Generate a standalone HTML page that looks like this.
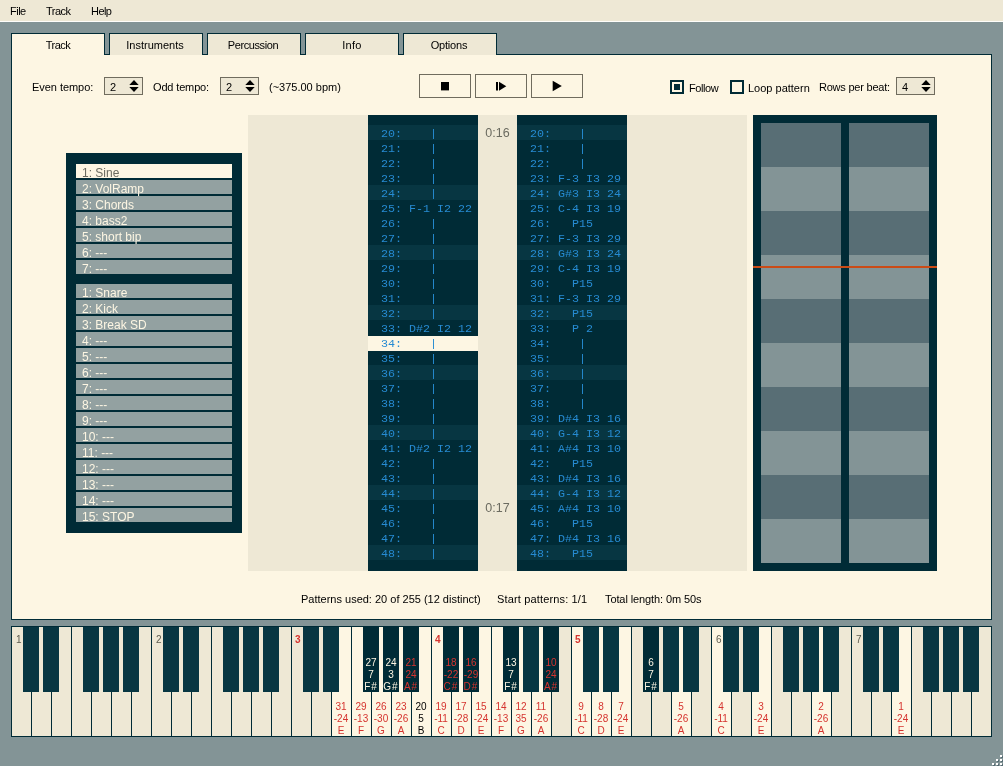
<!DOCTYPE html>
<html><head><meta charset="utf-8"><title>Tracker</title>
<style>
*{box-sizing:border-box;margin:0;padding:0}
html,body{width:1003px;height:766px;overflow:hidden}
body{background:#839496;font-family:"Liberation Sans",sans-serif;font-size:11px;color:#000;position:relative;will-change:transform}
.a{position:absolute}
.t{position:absolute;white-space:pre;line-height:14px;height:14px}
#menu{left:0;top:0;width:1003px;height:22px;background:#eee8d5;border-bottom:1px solid #fffefa}
.tab{position:absolute;top:33px;width:94px;height:22px;background:#eee8d5;border:1px solid #002b36;border-bottom:none;text-align:center;line-height:22px;white-space:pre}
.tab.act{background:#fdf6e3}
#panel{left:11px;top:54px;width:981px;height:566px;background:#fdf6e3;border:1px solid #002b36}
.spin{position:absolute;width:39px;height:18px;background:#eee8d5;border:1px solid #706c5e}
.spin span{position:absolute;left:5px;top:2px;line-height:14px}
.spin svg{position:absolute;right:2px;top:2px}
.btn{position:absolute;top:74px;width:52px;height:24px;border:1px solid #706c5e;background:#fdf6e3}
.cb{position:absolute;top:80px;width:14px;height:14px;border:2px solid #002b36;background:#fdf6e3}
.li{position:absolute;left:76px;width:156px;height:14px;background:#93a1a1;color:#fdf6e3;font-size:12px;line-height:14px;padding-left:6px;white-space:pre}
.li span{position:relative;top:2px}
.li.sel{background:#fdf6e3;color:#6b6b60}
.pcol{position:absolute;top:115px;width:110px;height:456px;background:#002b36;overflow:hidden}
.row{position:absolute;left:0;width:110px;height:15px;font-family:"Liberation Mono",monospace;font-size:11.667px;line-height:18px;color:#268bd2;white-space:pre;padding-left:13px;overflow:hidden}
.row.hl{background:#073642}
.row.cur{background:#fdf6e3;margin-top:1px;line-height:16px}
.tm{position:absolute;left:478px;width:39px;text-align:center;font-size:12.5px;color:#6b6b60;line-height:17px}
.wk{position:absolute;top:627px;width:19px;height:109px;background:#eee8d5}
.wk.on{background:#fdf6e3}
.bk{position:absolute;top:627px;width:16px;height:65px;background:#073642}
.bk.on{background:#002b36}
.kl{position:absolute;width:20px;text-align:center;font-size:10px;line-height:12px;white-space:pre}
.kl i{font-style:normal;letter-spacing:1px}
.ol{position:absolute;top:634px;font-size:10px;line-height:12px;color:#5b5a4e}
.ol.r{color:#d5342f;font-weight:bold}
</style></head><body>

<div id="menu" class="a"></div>
<div class="t" style="left:10px;top:4px;letter-spacing:-0.5px">File</div>
<div class="t" style="left:46px;top:4px;letter-spacing:-0.5px">Track</div>
<div class="t" style="left:91px;top:4px;letter-spacing:-0.55px">Help</div>
<div id="panel" class="a"></div>
<div class="tab act" style="left:11px;letter-spacing:-0.5px;text-indent:0px">Track</div>
<div class="tab" style="left:109px;letter-spacing:0px;text-indent:-2px">Instruments</div>
<div class="tab" style="left:207px;letter-spacing:-0.4px;text-indent:-2px">Percussion</div>
<div class="tab" style="left:305px;letter-spacing:0.3px;text-indent:0px">Info</div>
<div class="tab" style="left:403px;letter-spacing:-0.2px;text-indent:-2px">Options</div>
<div class="t" style="left:32px;top:80px;letter-spacing:-0.05px">Even tempo:</div>
<div class="t" style="left:153px;top:80px;letter-spacing:-0.15px">Odd tempo:</div>
<div class="t" style="left:269px;top:80px">(~375.00 bpm)</div>
<div class="spin" style="left:104px;top:77px"><span>2</span><svg width="11" height="12" viewBox="0 0 11 12"><path d="M0.3 5 L5 0 L9.7 5 Z M0.3 7 L5 12 L9.7 7 Z" fill="#000"/></svg></div>
<div class="spin" style="left:220px;top:77px"><span>2</span><svg width="11" height="12" viewBox="0 0 11 12"><path d="M0.3 5 L5 0 L9.7 5 Z M0.3 7 L5 12 L9.7 7 Z" fill="#000"/></svg></div>
<div class="spin" style="left:896px;top:77px"><span>4</span><svg width="11" height="12" viewBox="0 0 11 12"><path d="M0.3 5 L5 0 L9.7 5 Z M0.3 7 L5 12 L9.7 7 Z" fill="#000"/></svg></div>
<div class="btn" style="left:419px"></div>
<div class="btn" style="left:475px"></div>
<div class="btn" style="left:531px"></div>
<svg class="a" style="left:419px;top:74px" width="164" height="24"><rect x="22" y="8" width="8" height="8.4" fill="#000"/><rect x="77" y="8" width="2" height="8.5" fill="#000"/><path d="M80 7.7 L87.3 12.2 L80 16.7 Z" fill="#000"/><path d="M133.7 6.8 L142.8 12 L133.7 17.2 Z" fill="#000"/></svg>
<div class="cb" style="left:670px"><div class="a" style="left:2px;top:2px;width:6px;height:6px;background:#002b36"></div></div>
<div class="t" style="left:689px;top:81px;letter-spacing:-0.4px">Follow</div>
<div class="cb" style="left:730px"></div>
<div class="t" style="left:748px;top:81px">Loop pattern</div>
<div class="t" style="left:819px;top:80px;letter-spacing:-0.22px">Rows per beat:</div>
<div class="a" style="left:66px;top:153px;width:176px;height:380px;background:#002b36"></div>
<div class="li sel" style="top:164px"><span>1: Sine</span></div>
<div class="li" style="top:180px"><span>2: VolRamp</span></div>
<div class="li" style="top:196px"><span>3: Chords</span></div>
<div class="li" style="top:212px"><span>4: bass2</span></div>
<div class="li" style="top:228px"><span>5: short bip</span></div>
<div class="li" style="top:244px"><span>6: ---</span></div>
<div class="li" style="top:260px"><span>7: ---</span></div>
<div class="li" style="top:284px"><span>1: Snare</span></div>
<div class="li" style="top:300px"><span>2: Kick</span></div>
<div class="li" style="top:316px"><span>3: Break SD</span></div>
<div class="li" style="top:332px"><span>4: ---</span></div>
<div class="li" style="top:348px"><span>5: ---</span></div>
<div class="li" style="top:364px"><span>6: ---</span></div>
<div class="li" style="top:380px"><span>7: ---</span></div>
<div class="li" style="top:396px"><span>8: ---</span></div>
<div class="li" style="top:412px"><span>9: ---</span></div>
<div class="li" style="top:428px"><span>10: ---</span></div>
<div class="li" style="top:444px"><span>11: ---</span></div>
<div class="li" style="top:460px"><span>12: ---</span></div>
<div class="li" style="top:476px"><span>13: ---</span></div>
<div class="li" style="top:492px"><span>14: ---</span></div>
<div class="li" style="top:508px"><span>15: STOP</span></div>
<div class="a" style="left:248px;top:115px;width:499px;height:456px;background:#eee8d5"></div>
<div class="pcol" style="left:368px">
<div class="row hl" style="top:10px">20:    |</div>
<div class="row" style="top:25px">21:    |</div>
<div class="row" style="top:40px">22:    |</div>
<div class="row" style="top:55px">23:    |</div>
<div class="row hl" style="top:70px">24:    |</div>
<div class="row" style="top:85px">25: F-1 I2 22</div>
<div class="row" style="top:100px">26:    |</div>
<div class="row" style="top:115px">27:    |</div>
<div class="row hl" style="top:130px">28:    |</div>
<div class="row" style="top:145px">29:    |</div>
<div class="row" style="top:160px">30:    |</div>
<div class="row" style="top:175px">31:    |</div>
<div class="row hl" style="top:190px">32:    |</div>
<div class="row" style="top:205px">33: D#2 I2 12</div>
<div class="row cur" style="top:220px">34:    |</div>
<div class="row" style="top:235px">35:    |</div>
<div class="row hl" style="top:250px">36:    |</div>
<div class="row" style="top:265px">37:    |</div>
<div class="row" style="top:280px">38:    |</div>
<div class="row" style="top:295px">39:    |</div>
<div class="row hl" style="top:310px">40:    |</div>
<div class="row" style="top:325px">41: D#2 I2 12</div>
<div class="row" style="top:340px">42:    |</div>
<div class="row" style="top:355px">43:    |</div>
<div class="row hl" style="top:370px">44:    |</div>
<div class="row" style="top:385px">45:    |</div>
<div class="row" style="top:400px">46:    |</div>
<div class="row" style="top:415px">47:    |</div>
<div class="row hl" style="top:430px">48:    |</div>
</div>
<div class="pcol" style="left:517px">
<div class="row hl" style="top:10px">20:    |</div>
<div class="row" style="top:25px">21:    |</div>
<div class="row" style="top:40px">22:    |</div>
<div class="row" style="top:55px">23: F-3 I3 29</div>
<div class="row hl" style="top:70px">24: G#3 I3 24</div>
<div class="row" style="top:85px">25: C-4 I3 19</div>
<div class="row" style="top:100px">26:   P15</div>
<div class="row" style="top:115px">27: F-3 I3 29</div>
<div class="row hl" style="top:130px">28: G#3 I3 24</div>
<div class="row" style="top:145px">29: C-4 I3 19</div>
<div class="row" style="top:160px">30:   P15</div>
<div class="row" style="top:175px">31: F-3 I3 29</div>
<div class="row hl" style="top:190px">32:   P15</div>
<div class="row" style="top:205px">33:   P 2</div>
<div class="row" style="top:220px">34:    |</div>
<div class="row" style="top:235px">35:    |</div>
<div class="row hl" style="top:250px">36:    |</div>
<div class="row" style="top:265px">37:    |</div>
<div class="row" style="top:280px">38:    |</div>
<div class="row" style="top:295px">39: D#4 I3 16</div>
<div class="row hl" style="top:310px">40: G-4 I3 12</div>
<div class="row" style="top:325px">41: A#4 I3 10</div>
<div class="row" style="top:340px">42:   P15</div>
<div class="row" style="top:355px">43: D#4 I3 16</div>
<div class="row hl" style="top:370px">44: G-4 I3 12</div>
<div class="row" style="top:385px">45: A#4 I3 10</div>
<div class="row" style="top:400px">46:   P15</div>
<div class="row" style="top:415px">47: D#4 I3 16</div>
<div class="row hl" style="top:430px">48:   P15</div>
</div>
<div class="tm" style="top:125px">0:16</div>
<div class="tm" style="top:500px">0:17</div>
<div class="a" style="left:753px;top:115px;width:184px;height:456px;background:#002b36"></div>
<div class="a" style="left:761px;top:123px;width:80px;height:440px;background:repeating-linear-gradient(to bottom,#586e75 0,#586e75 44px,#839496 44px,#839496 88px)"></div>
<div class="a" style="left:849px;top:123px;width:80px;height:440px;background:repeating-linear-gradient(to bottom,#586e75 0,#586e75 44px,#839496 44px,#839496 88px)"></div>
<div class="a" style="left:753px;top:266px;width:184px;height:2px;background:#cb4b16"></div>
<div class="t" style="left:301px;top:592px">Patterns used: 20 of 255 (12 distinct)</div>
<div class="t" style="left:497px;top:592px;letter-spacing:0.15px">Start patterns: 1/1</div>
<div class="t" style="left:605px;top:592px;letter-spacing:-0.1px">Total length: 0m 50s</div>
<div class="a" style="left:11px;top:626px;width:981px;height:111px;background:#002b36"></div>
<div class="wk" style="left:12px"></div>
<div class="wk" style="left:32px"></div>
<div class="wk" style="left:52px"></div>
<div class="wk" style="left:72px"></div>
<div class="wk" style="left:92px"></div>
<div class="wk" style="left:112px"></div>
<div class="wk" style="left:132px"></div>
<div class="wk" style="left:152px"></div>
<div class="wk" style="left:172px"></div>
<div class="wk" style="left:192px"></div>
<div class="wk" style="left:212px"></div>
<div class="wk" style="left:232px"></div>
<div class="wk" style="left:252px"></div>
<div class="wk" style="left:272px"></div>
<div class="wk" style="left:292px"></div>
<div class="wk" style="left:312px"></div>
<div class="wk on" style="left:332px"></div>
<div class="kl" style="left:331px;top:701px;color:#d5342f">31
-24
E</div>
<div class="wk on" style="left:352px"></div>
<div class="kl" style="left:351px;top:701px;color:#d5342f">29
-13
F</div>
<div class="wk on" style="left:372px"></div>
<div class="kl" style="left:371px;top:701px;color:#d5342f">26
-30
G</div>
<div class="wk on" style="left:392px"></div>
<div class="kl" style="left:391px;top:701px;color:#d5342f">23
-26
A</div>
<div class="wk on" style="left:412px"></div>
<div class="kl" style="left:411px;top:701px;color:#000">20
5
B</div>
<div class="wk on" style="left:432px"></div>
<div class="kl" style="left:431px;top:701px;color:#d5342f">19
-11
C</div>
<div class="wk on" style="left:452px"></div>
<div class="kl" style="left:451px;top:701px;color:#d5342f">17
-28
D</div>
<div class="wk on" style="left:472px"></div>
<div class="kl" style="left:471px;top:701px;color:#d5342f">15
-24
E</div>
<div class="wk on" style="left:492px"></div>
<div class="kl" style="left:491px;top:701px;color:#d5342f">14
-13
F</div>
<div class="wk on" style="left:512px"></div>
<div class="kl" style="left:511px;top:701px;color:#d5342f">12
35
G</div>
<div class="wk on" style="left:532px"></div>
<div class="kl" style="left:531px;top:701px;color:#d5342f">11
-26
A</div>
<div class="wk" style="left:552px"></div>
<div class="wk on" style="left:572px"></div>
<div class="kl" style="left:571px;top:701px;color:#d5342f">9
-11
C</div>
<div class="wk on" style="left:592px"></div>
<div class="kl" style="left:591px;top:701px;color:#d5342f">8
-28
D</div>
<div class="wk on" style="left:612px"></div>
<div class="kl" style="left:611px;top:701px;color:#d5342f">7
-24
E</div>
<div class="wk" style="left:632px"></div>
<div class="wk" style="left:652px"></div>
<div class="wk on" style="left:672px"></div>
<div class="kl" style="left:671px;top:701px;color:#d5342f">5
-26
A</div>
<div class="wk" style="left:692px"></div>
<div class="wk on" style="left:712px"></div>
<div class="kl" style="left:711px;top:701px;color:#d5342f">4
-11
C</div>
<div class="wk" style="left:732px"></div>
<div class="wk on" style="left:752px"></div>
<div class="kl" style="left:751px;top:701px;color:#d5342f">3
-24
E</div>
<div class="wk" style="left:772px"></div>
<div class="wk" style="left:792px"></div>
<div class="wk on" style="left:812px"></div>
<div class="kl" style="left:811px;top:701px;color:#d5342f">2
-26
A</div>
<div class="wk" style="left:832px"></div>
<div class="wk" style="left:852px"></div>
<div class="wk" style="left:872px"></div>
<div class="wk on" style="left:892px"></div>
<div class="kl" style="left:891px;top:701px;color:#d5342f">1
-24
E</div>
<div class="wk" style="left:912px"></div>
<div class="wk" style="left:932px"></div>
<div class="wk" style="left:952px"></div>
<div class="wk" style="left:972px"></div>
<div class="bk" style="left:23px"></div>
<div class="bk" style="left:43px"></div>
<div class="bk" style="left:83px"></div>
<div class="bk" style="left:103px"></div>
<div class="bk" style="left:123px"></div>
<div class="bk" style="left:163px"></div>
<div class="bk" style="left:183px"></div>
<div class="bk" style="left:223px"></div>
<div class="bk" style="left:243px"></div>
<div class="bk" style="left:263px"></div>
<div class="bk" style="left:303px"></div>
<div class="bk" style="left:323px"></div>
<div class="bk on" style="left:363px"></div>
<div class="kl" style="left:361px;top:657px;color:#fdf6e3">27
7
<i>F#</i></div>
<div class="bk on" style="left:383px"></div>
<div class="kl" style="left:381px;top:657px;color:#fdf6e3">24
3
<i>G#</i></div>
<div class="bk on" style="left:403px"></div>
<div class="kl" style="left:401px;top:657px;color:#d5342f">21
24
<i>A#</i></div>
<div class="bk on" style="left:443px"></div>
<div class="kl" style="left:441px;top:657px;color:#d5342f">18
-22
<i>C#</i></div>
<div class="bk on" style="left:463px"></div>
<div class="kl" style="left:461px;top:657px;color:#d5342f">16
-29
<i>D#</i></div>
<div class="bk on" style="left:503px"></div>
<div class="kl" style="left:501px;top:657px;color:#fdf6e3">13
7
<i>F#</i></div>
<div class="bk" style="left:523px"></div>
<div class="bk on" style="left:543px"></div>
<div class="kl" style="left:541px;top:657px;color:#d5342f">10
24
<i>A#</i></div>
<div class="bk" style="left:583px"></div>
<div class="bk" style="left:603px"></div>
<div class="bk on" style="left:643px"></div>
<div class="kl" style="left:641px;top:657px;color:#fdf6e3">6
7
<i>F#</i></div>
<div class="bk" style="left:663px"></div>
<div class="bk" style="left:683px"></div>
<div class="bk" style="left:723px"></div>
<div class="bk" style="left:743px"></div>
<div class="bk" style="left:783px"></div>
<div class="bk" style="left:803px"></div>
<div class="bk" style="left:823px"></div>
<div class="bk" style="left:863px"></div>
<div class="bk" style="left:883px"></div>
<div class="bk" style="left:923px"></div>
<div class="bk" style="left:943px"></div>
<div class="bk" style="left:963px"></div>
<div class="ol" style="left:16px">1</div>
<div class="ol" style="left:156px">2</div>
<div class="ol r" style="left:295px">3</div>
<div class="ol r" style="left:435px">4</div>
<div class="ol r" style="left:575px">5</div>
<div class="ol" style="left:716px">6</div>
<div class="ol" style="left:856px">7</div>
<svg class="a" style="left:991px;top:754px" width="12" height="12"><rect x="10" y="2" width="2" height="2" fill="#586e75"/><rect x="6" y="6" width="2" height="2" fill="#586e75"/><rect x="10" y="6" width="2" height="2" fill="#586e75"/><rect x="2" y="10" width="2" height="2" fill="#586e75"/><rect x="6" y="10" width="2" height="2" fill="#586e75"/><rect x="10" y="10" width="2" height="2" fill="#586e75"/><rect x="9" y="1" width="2" height="2" fill="#fff"/><rect x="5" y="5" width="2" height="2" fill="#fff"/><rect x="9" y="5" width="2" height="2" fill="#fff"/><rect x="1" y="9" width="2" height="2" fill="#fff"/><rect x="5" y="9" width="2" height="2" fill="#fff"/><rect x="9" y="9" width="2" height="2" fill="#fff"/></svg>
</body></html>
